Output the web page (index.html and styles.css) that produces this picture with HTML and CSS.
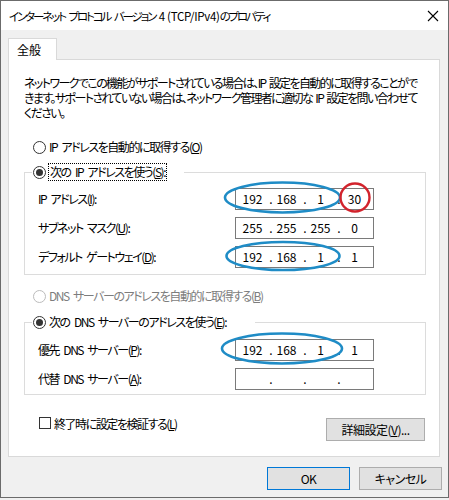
FILE: index.html
```html
<!DOCTYPE html>
<html lang="ja">
<head>
<meta charset="utf-8">
<title>IPv4 プロパティ</title>
<link rel="stylesheet" href="styles.css">
</head>
<body>
<div class="window">
  <div class="titlebar">
    <span class="title">インターネット プロトコル バージョン <span class="lat">4 (TCP/IPv4)</span>のプロパティ</span>
    <svg class="close" width="12" height="12" viewBox="0 0 12 12"><path d="M1 1L11 11M11 1L1 11" stroke="#000" stroke-width="1.1" fill="none"/></svg>
  </div>
  <div class="body">
    <div class="tabs"><div class="tab">全般</div></div>
    <div class="panel">
      <p class="desc">ネットワークでこの機能がサポートされている場合は、IP 設定を自動的に取得することがで<br>きます。サポートされていない場合は、ネットワーク管理者に適切な IP 設定を問い合わせて<br>ください。</p>

      <div class="radio-row first"><span class="radio"></span><span class="rlabel">IP アドレスを自動的に取得する(<u>O</u>)</span></div>

      <fieldset class="group group-ip">
        <legend class="legend legend-ip"><span class="radio checked"></span><span class="rlabel focus">次の IP アドレスを使う(<u>S</u>):</span></legend>
        <div class="field-row">
          <span class="label">IP アドレス(<u>I</u>):</span>
          <div class="ipbox"><span class="seg">192</span><span class="dot">.</span><span class="seg">168</span><span class="dot">.</span><span class="seg">1</span><span class="dot">.</span><span class="seg">30</span></div>
        </div>
        <div class="field-row">
          <span class="label">サブネット マスク(<u>U</u>):</span>
          <div class="ipbox"><span class="seg">255</span><span class="dot">.</span><span class="seg">255</span><span class="dot">.</span><span class="seg">255</span><span class="dot">.</span><span class="seg">0</span></div>
        </div>
        <div class="field-row">
          <span class="label">デフォルト ゲートウェイ(<u>D</u>):</span>
          <div class="ipbox"><span class="seg">192</span><span class="dot">.</span><span class="seg">168</span><span class="dot">.</span><span class="seg">1</span><span class="dot">.</span><span class="seg">1</span></div>
        </div>
      </fieldset>

      <div class="radio-row second disabled"><span class="radio"></span><span class="rlabel">DNS サーバーのアドレスを自動的に取得する(<u>B</u>)</span></div>

      <fieldset class="group group-dns">
        <legend class="legend legend-dns"><span class="radio checked"></span><span class="rlabel">次の DNS サーバーのアドレスを使う(<u>E</u>):</span></legend>
        <div class="field-row">
          <span class="label">優先 DNS サーバー(<u>P</u>):</span>
          <div class="ipbox"><span class="seg">192</span><span class="dot">.</span><span class="seg">168</span><span class="dot">.</span><span class="seg">1</span><span class="dot">.</span><span class="seg">1</span></div>
        </div>
        <div class="field-row">
          <span class="label">代替 DNS サーバー(<u>A</u>):</span>
          <div class="ipbox"><span class="seg"></span><span class="dot">.</span><span class="seg"></span><span class="dot">.</span><span class="seg"></span><span class="dot">.</span><span class="seg"></span></div>
        </div>
      </fieldset>

      <div class="bottom-row">
        <label class="check"><span class="checkbox"></span><span>終了時に設定を検証する(<u>L</u>)</span></label>
        <button class="btn btn-adv">詳細設定(<u>V</u>)...</button>
      </div>
    </div>
    <div class="buttons">
      <button class="btn btn-main default">OK</button>
      <button class="btn btn-main">キャンセル</button>
    </div>
  </div>
  <svg class="annot" width="449" height="500" viewBox="0 0 449 500">
    <ellipse cx="282.5" cy="197.5" rx="57.5" ry="15" fill="none" stroke="#1f8cc6" stroke-width="2.6"/>
    <ellipse cx="355" cy="197.5" rx="14.5" ry="14" fill="none" stroke="#d2232c" stroke-width="2.4"/>
    <ellipse cx="283" cy="256" rx="56.5" ry="14" fill="none" stroke="#1f8cc6" stroke-width="2.6"/>
    <ellipse cx="282" cy="348.5" rx="60" ry="15" fill="none" stroke="#1f8cc6" stroke-width="2.6"/>
  </svg>
</div>
</body>
</html>
```

FILE: styles.css
```css
* { box-sizing: border-box; }
html, body { margin: 0; padding: 0; }
body {
  width: 449px;
  height: 500px;
  background: #f0f0f0;
  font-family: "Noto Sans CJK JP", sans-serif;
  font-size: 12px;
  color: #000;
  font-feature-settings: "palt";
  letter-spacing: -1.45px;
  word-spacing: 3px;
  overflow: hidden;
}
u { text-decoration: underline; text-underline-offset: 1px; }

.window {
  position: relative;
  width: 449px;
  height: 498px;
  border: 1px solid #6b6b6b;
  background: #f0f0f0;
  display: flex;
  flex-direction: column;
}

.titlebar {
  height: 29px;
  background: #fff;
  display: flex;
  align-items: center;
  justify-content: space-between;
  padding: 0 9px 0 8px;
}
.title { font-size: 11.5px; line-height: 16px; letter-spacing: -2.1px; word-spacing: 3px; }
.title .lat { letter-spacing: -0.3px; word-spacing: 0; }
.close { display: block; }

.body {
  flex: 1;
  padding: 8px 8px 0 7px;
  display: flex;
  flex-direction: column;
}

.tabs { display: flex; }
.tab {
  width: 49px;
  height: 22px;
  margin-bottom: -1px;
  background: #fff;
  border: 1px solid #d9d9d9;
  border-bottom: none;
  padding: 3px 0 0 8px;
  line-height: 16px;
  letter-spacing: 0;
  position: relative;
  z-index: 1;
}

.panel {
  height: 398px;
  background: #fff;
  border: 1px solid #d9d9d9;
  padding: 15px 13px 0 15px;
}

.desc {
  margin: 0;
  line-height: 15px;
  white-space: nowrap;
  letter-spacing: -1.6px;
  word-spacing: 2px;
}

.radio-row {
  display: flex;
  align-items: center;
  height: 20px;
  padding-left: 9px;
}
.radio-row.first { margin-top: 17px; }
.radio-row.second { margin-top: 11px; }

.radio {
  width: 13px;
  height: 13px;
  border: 1px solid #333;
  border-radius: 50%;
  background: #fff;
  display: flex;
  align-items: center;
  justify-content: center;
  flex: none;
}
.radio.checked::after {
  content: "";
  width: 7px;
  height: 7px;
  border-radius: 50%;
  background: #333;
}
.rlabel { margin-left: 3px; line-height: 16px; }
.disabled { color: #7d7d7d; }
.disabled .radio { border-color: #bcbcbc; }

.group {
  margin: 6px 0 0 0;
  border: 1px solid #dcdcdc;
  padding: 3px 0 3px 7px;
  min-width: 0;
}
.group-dns { margin-top: 7px; padding-top: 4px; padding-bottom: 1px; }

.legend {
  display: flex;
  align-items: center;
  height: 18px;
  padding: 0 0 0 1px;
  background: #fff;
}
.legend-ip { padding-right: 18px; }
.legend-dns { padding-right: 29px; }
.focus { outline: 1px dotted #000; outline-offset: 0; padding: 0 1px; }

.field-row {
  display: grid;
  grid-template-columns: 197px 139px;
  align-items: center;
  height: 29px;
  padding-left: 6px;
}
.label { line-height: 16px; }

.ipbox {
  height: 22px;
  border: 1px solid #7a7a7a;
  background: #fff;
  display: flex;
  align-items: center;
  padding-left: 3px;
  line-height: 16px;
  letter-spacing: 0;
  word-spacing: 0;
}
.seg { width: 30px; text-align: center; padding-right: 3px; }
.dot { width: 4px; text-align: center; }

.bottom-row {
  display: flex;
  justify-content: space-between;
  align-items: flex-start;
  margin-top: 19px;
  padding-left: 15px;
}
.check {
  display: flex;
  align-items: center;
  height: 18px;
}
.checkbox {
  width: 12px;
  height: 12px;
  border: 1px solid #333;
  background: #fff;
  margin-right: 3px;
}

.btn {
  font: inherit;
  font-feature-settings: "palt";
  letter-spacing: -0.5px;
  word-spacing: 0;
  color: #000;
  background: #e1e1e1;
  border: 1px solid #adadad;
  height: 23px;
  padding: 0;
  line-height: 16px;
}
.btn-adv { width: 99px; margin-top: 4px; margin-right: 1px; }

.buttons {
  display: flex;
  justify-content: flex-end;
  gap: 9px;
  margin-top: 10px;
  margin-right: -2px;
}
.btn-main { width: 83px; }
.btn.default { border-color: #0078d7; }

.annot {
  position: absolute;
  left: -1px;
  top: -1px;
  pointer-events: none;
}
```
